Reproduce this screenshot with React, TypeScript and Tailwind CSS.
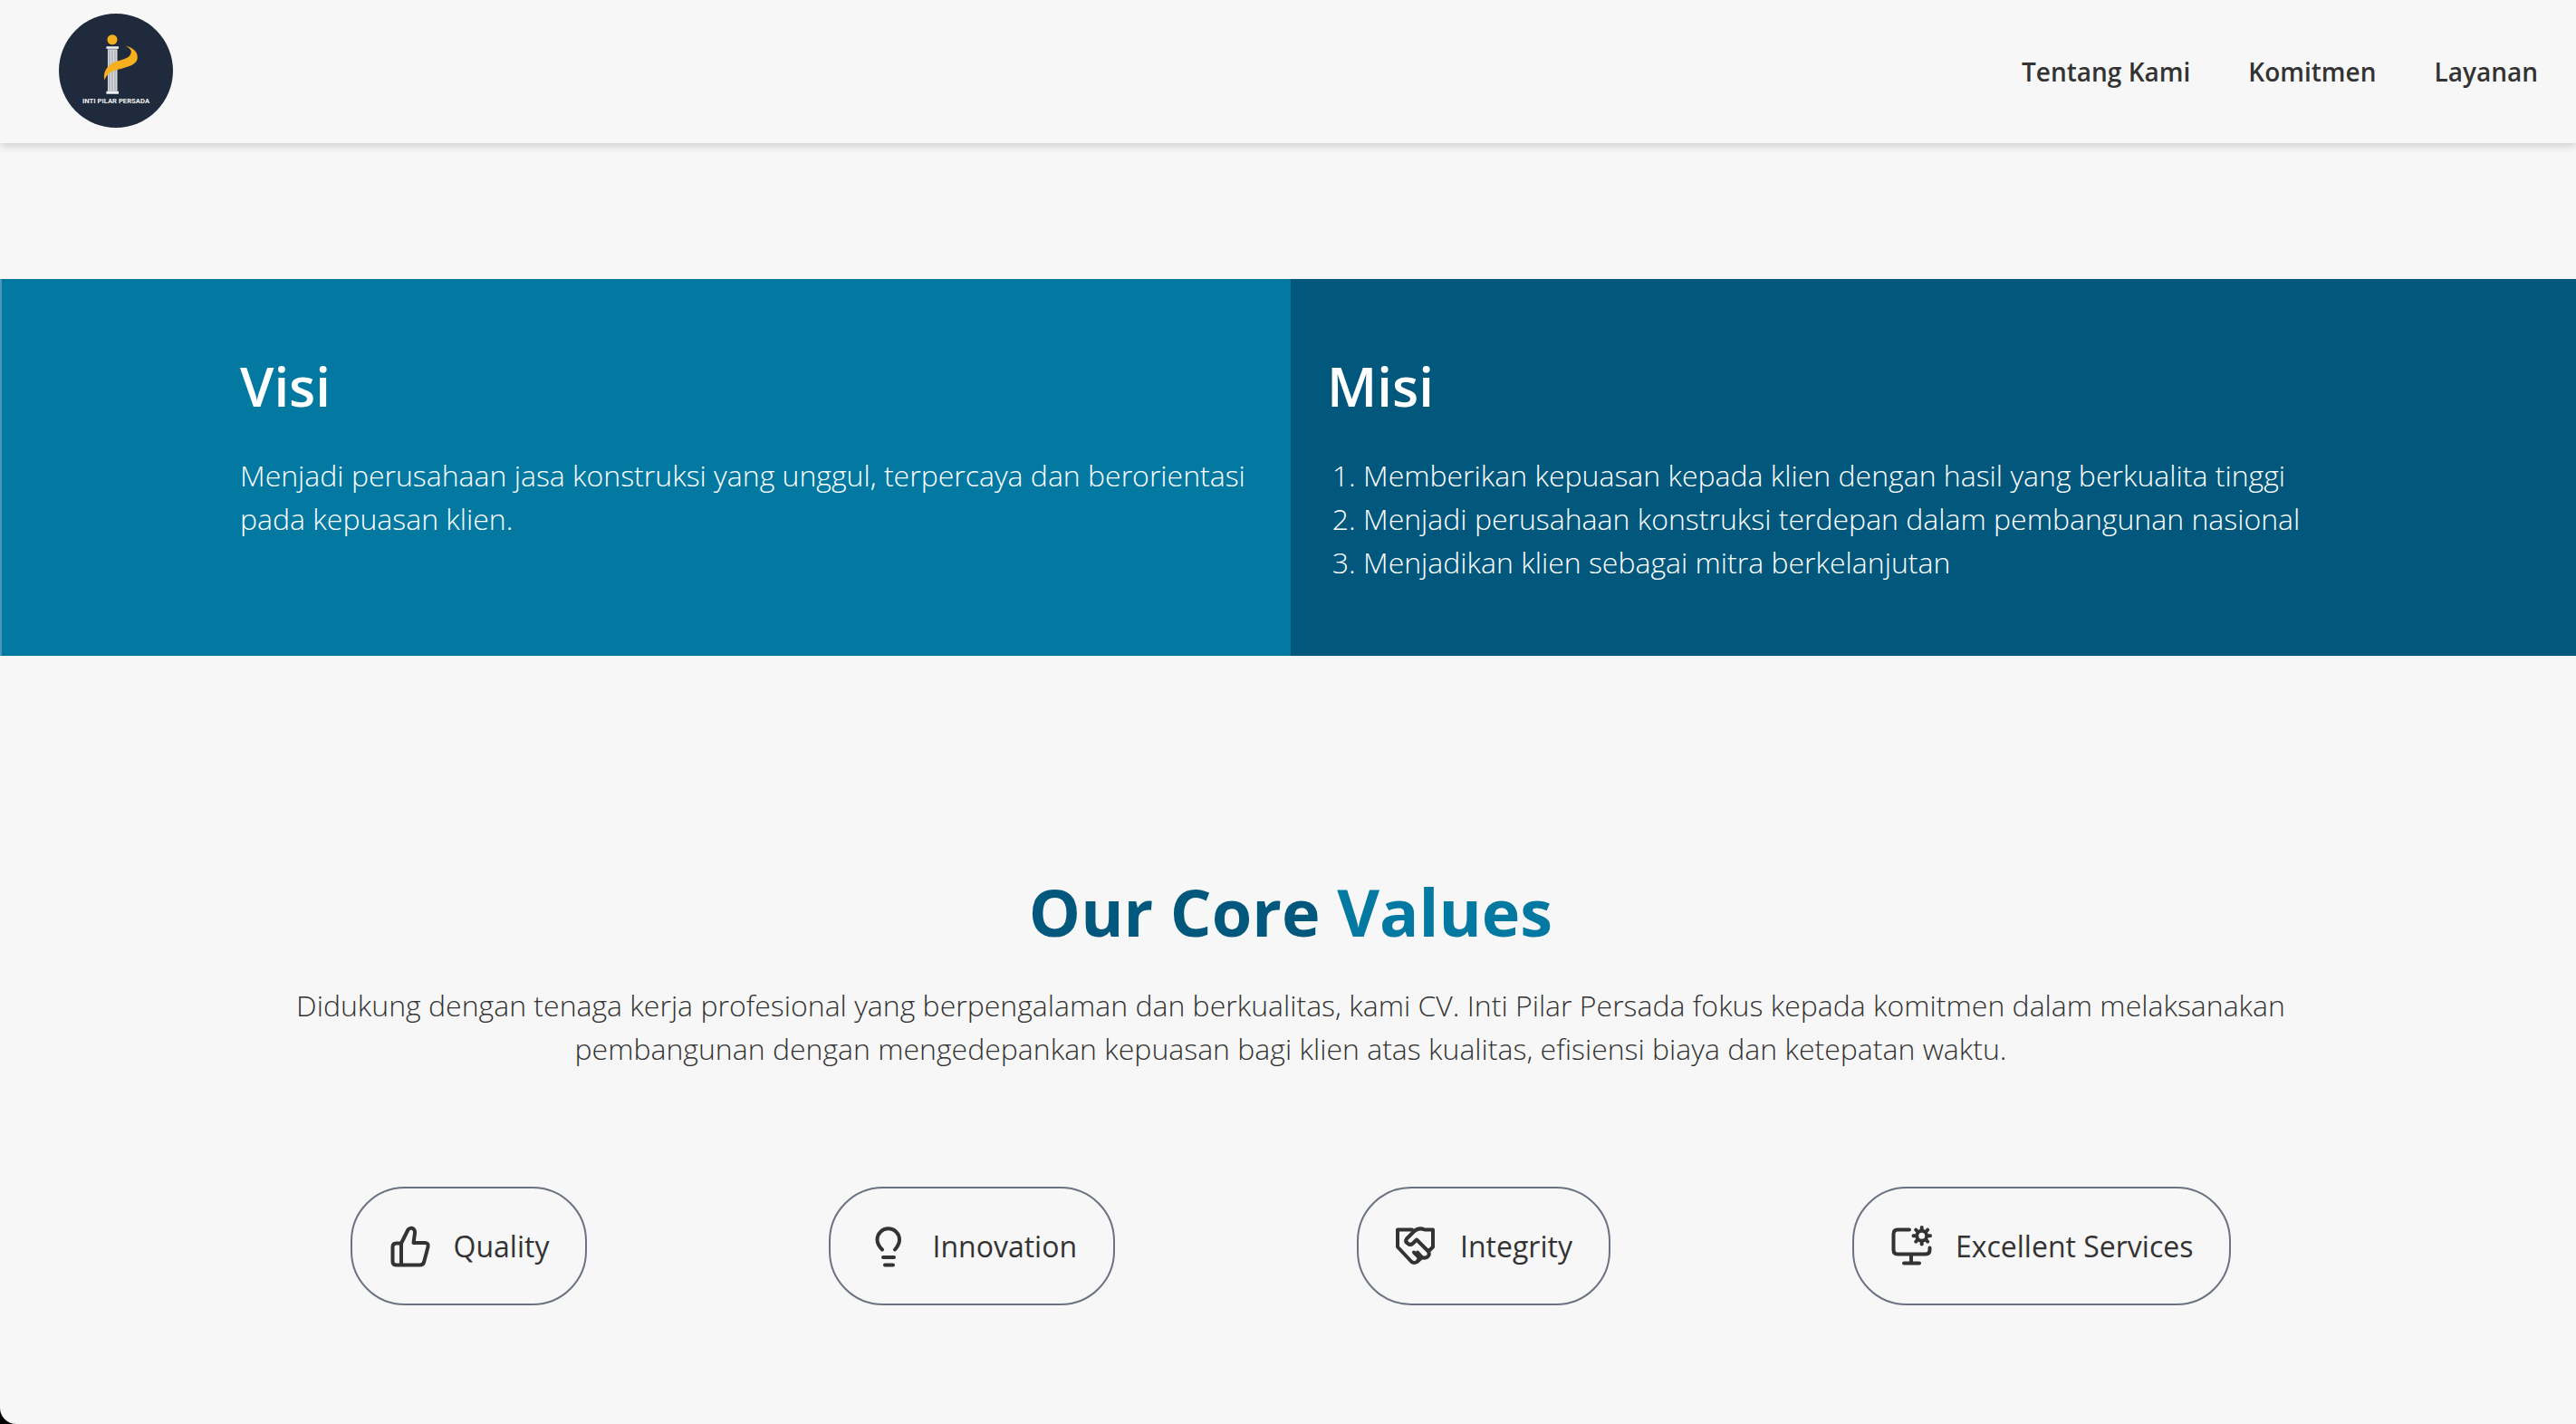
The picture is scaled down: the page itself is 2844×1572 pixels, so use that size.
import type { ReactNode } from "react";

function Logo() {
  return (
    <div className="w-[126px] h-[126px] mb-[3px] rounded-full bg-[#1f2a3d] relative overflow-hidden">
      <svg viewBox="0 0 125 125" className="w-[126px] h-[126px]">
        <circle cx="58.5" cy="28.5" r="5.5" fill="#f6b01e" />
        <rect x="52" y="36" width="13.5" height="2.5" fill="#f4f4f4" />
        <rect x="53.5" y="39" width="10.5" height="46" fill="#d6d8dc" />
        <path d="M55.5 40v44M58.5 40v44M61.5 40v44" stroke="#8a8f98" strokeWidth="0.8" />
        <rect x="52" y="85" width="13.5" height="3" fill="#f4f4f4" />
        <path d="M72 35c9 2 15 7 14 14-1 8-14 10-24 13-6 2-10 5-12 11-2-8 2-15 9-19 9-4 19-4 20-11 1-3-2-6-7-8z" fill="#f6b01e" />
      </svg>
      <span className="absolute left-[26px] top-[91px] text-[7.7px] leading-[12px] font-bold text-[#f1f1f1] font-['Roboto',sans-serif] whitespace-nowrap">INTI PILAR PERSADA</span>
    </div>
  );
}

function Icon({ vx, children }: { vx: number; children: ReactNode }) {
  return (
    <svg
      viewBox={`${vx} 9.5 48 48`}
      className="w-[48px] h-[48px] shrink-0"
      fill="none"
      stroke="#333333"
      strokeWidth="4"
      strokeLinecap="round"
      strokeLinejoin="round"
    >
      {children}
    </svg>
  );
}

function Pill({ icon, label }: { icon: ReactNode; label: string }) {
  return (
    <div className="h-[131px] px-[40px] rounded-[60px] border-2 border-[#6b7280] flex items-center gap-[24px] text-[32px] font-normal text-[#333333]">
      {icon}
      <span>{label}</span>
    </div>
  );
}

export default function App() {
  return (
    <div className="bg-black h-[1572px] overflow-hidden">
      <div className="h-[1572px] bg-[#f7f7f7] rounded-bl-[18px] font-['Open_Sans',sans-serif] overflow-hidden">
        <header className="h-[158px] bg-[#f7f7f7] shadow-[0_2px_10px_rgba(0,0,0,0.2)] flex items-center justify-between pl-[65px] pr-[42px] relative">
          <Logo />
          <nav className="flex gap-[64px] text-[28px] font-semibold text-[#333333]">
            <a>Tentang Kami</a>
            <a>Komitmen</a>
            <a>Layanan</a>
          </nav>
        </header>

        <div className="w-[2850px]">
          <section className="mt-[150px] h-[416px] grid grid-cols-2 text-white">
            <div className="bg-[#0379a1] pl-[263px] pr-[40px] pt-[78px] border-l-2 border-[#4a98b6]">
              <h2 className="text-[60px] leading-[80px] font-semibold mb-[35px]">Visi</h2>
              <p className="text-[32px] leading-[48px] font-light">
                Menjadi perusahaan jasa konstruksi yang unggul, terpercaya dan berorientasi pada kepuasan klien.
              </p>
            </div>
            <div className="bg-[#02587c] pl-[40px] pt-[78px]">
              <h2 className="text-[60px] leading-[80px] font-semibold mb-[35px]">Misi</h2>
              <ol className="text-[32px] leading-[48px] font-light list-decimal pl-[40px]">
                <li>Memberikan kepuasan kepada klien dengan hasil yang berkualita tinggi</li>
                <li>Menjadi perusahaan konstruksi terdepan dalam pembangunan nasional</li>
                <li>Menjadikan klien sebagai mitra berkelanjutan</li>
              </ol>
            </div>
          </section>

          <section className="pt-[239px] flex flex-col items-center">
            <h2 className="text-[72px] leading-[86px] font-bold text-[#02587c]">
              Our Core <span className="text-[#0379a1]">Values</span>
            </h2>
            <p className="mt-[37px] w-[2240px] text-center text-[32px] leading-[48px] font-light text-[#333333]">
              Didukung dengan tenaga kerja profesional yang berpengalaman dan berkualitas, kami CV. Inti Pilar Persada fokus kepada komitmen dalam melaksanakan pembangunan dengan mengedepankan kepuasan bagi klien atas kualitas, efisiensi biaya dan ketepatan waktu.
            </p>
            <div className="mt-[128px] flex justify-center gap-[267px]">
              <Pill
                label="Quality"
                icon={
                  <Icon vx={9.5}>
                    <path d="M23.5 30 L31 15 Q33 12.5 36 13.5 Q39 15 38.5 19 L37 29.5 H50 Q54 30 53 34 L48.5 51 Q47.5 54 44 54 H18 Q14 54 14 50 V34 Q14 30 18 30 H23.5 V54" />
                  </Icon>
                }
              />
              <Pill
                label="Innovation"
                icon={
                  <Icon vx={7}>
                    <path d="M24 37 C20 33 18.5 30 18.5 26 A12.2 12.2 0 0 1 43 26 C43 30 41.5 33 38 37" />
                    <path d="M25 45.5 H37 M27 54 H36" />
                  </Icon>
                }
              />
              <Pill
                label="Integrity"
                icon={
                  <Icon vx={11}>
                    <path d="M14 15 H30 M14 15 V34 L29 50 Q32 53 36 50 L41 45.5 Q44 47 47 45 Q50 42.5 48 39 L53 34 V15 H44 Q37 12 32 17 L24 25 Q22 28 25 30 Q28 33 31 30 L35 26 L48 39" />
                    <path d="M41 45.5 L36 40 M36 50 Q38 47 37 45 L32 40" />
                  </Icon>
                }
              />
              <Pill
                label="Excellent Services"
                icon={
                  <Icon vx={13}>
                    <path d="M34 15 H21 Q16.5 15 16.5 20 V37 Q16.5 42 21 42 H52 Q56.5 42 56.5 37 V35" />
                    <path d="M36 43 V52 M28 52 H45" />
                    <circle cx="47.7" cy="21.7" r="5.5" />
                    <path d="M47.7 12.5V14M47.7 29.5V31M38.5 21.7H40M55.5 21.7H57M41.2 15.2L42.2 16.2M53.2 27.2L54.2 28.2M41.2 28.2L42.2 27.2M53.2 16.2L54.2 15.2" />
                  </Icon>
                }
              />
            </div>
          </section>
        </div>
      </div>
    </div>
  );
}
